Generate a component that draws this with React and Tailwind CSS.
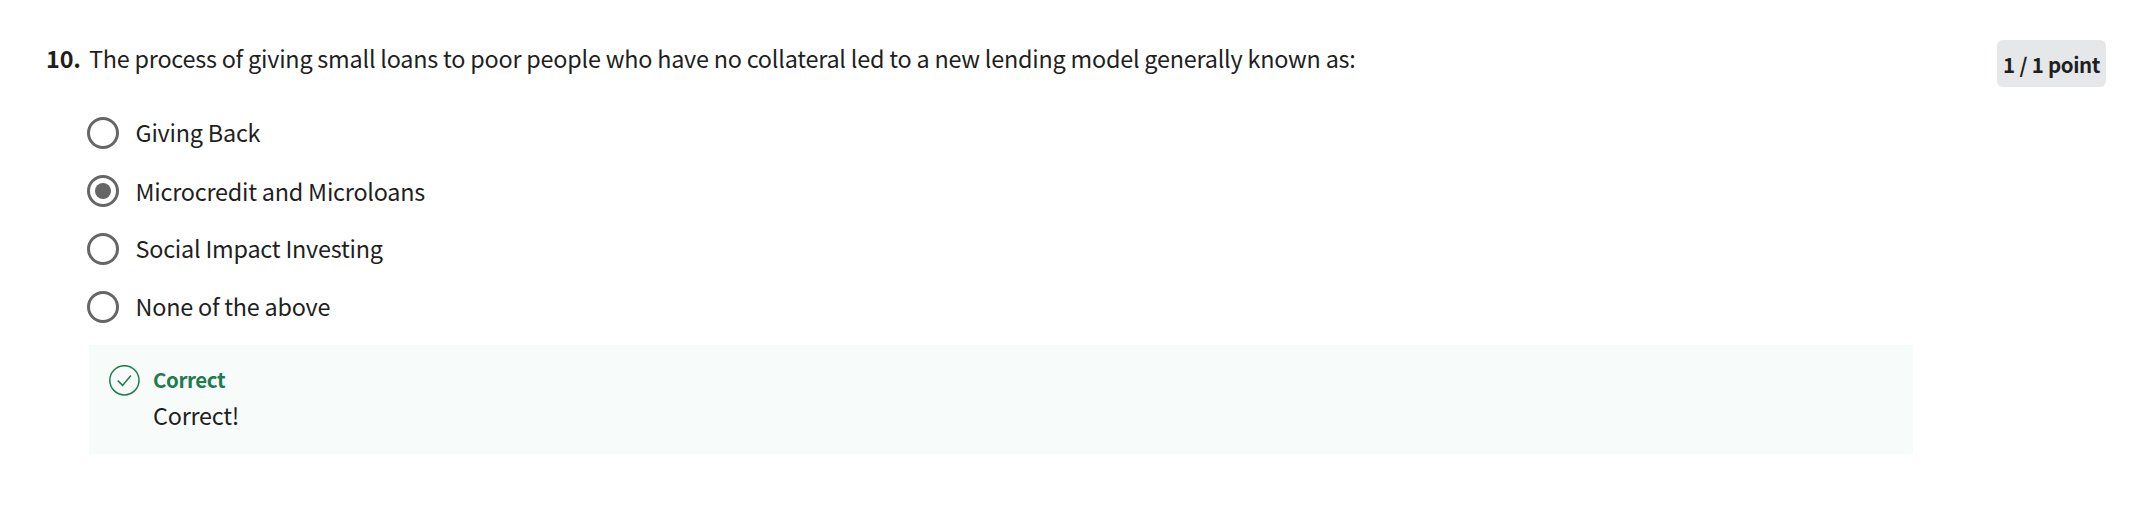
const options = [
  { label: "Giving Back", selected: false },
  { label: "Microcredit and Microloans", selected: true },
  { label: "Social Impact Investing", selected: false },
  { label: "None of the above", selected: false },
];

function Radio({ selected }) {
  return (
    <span className="flex size-8 shrink-0 items-center justify-center rounded-full border-3 border-[#666666]">
      {selected && <span className="size-4 rounded-full bg-[#666666]" />}
    </span>
  );
}

export default function App() {
  return (
    <main className="flex h-[516px] w-[2136px] items-start bg-white font-['Noto_Sans_CJK_SC',sans-serif] text-[23.4px] tracking-[-0.225px] text-[#1f1f1f]">
      <div className="w-[89px] shrink-0 pt-10 pl-[46px] leading-9 font-bold tracking-[-0.15px]">10.</div>
      <section className="w-[1824px] shrink-0">
        <p className="pt-10 leading-9 whitespace-nowrap">
          The process of giving small loans to poor people who have no collateral led to a new lending model generally known as:
        </p>
        <ul className="-ml-[2px] pt-[27px]">
          {options.map((option) => (
            <li key={option.label} className="flex h-[58px] items-center gap-[16.5px] whitespace-nowrap first:h-[59px]">
              <Radio selected={option.selected} />
              <span className={option.selected ? "pt-px" : ""}>{option.label}</span>
            </li>
          ))}
        </ul>
        <div className="mt-[9px] flex h-[109px] gap-3 bg-[#f7fbfa] pt-5 pl-5">
          <svg className="size-8" viewBox="0 0 32 32" fill="none" stroke="#1d7c50" strokeWidth="1.5">
            <circle cx="15.4" cy="15.3" r="14.6" />
            <path d="M8.8 15.6l4.8 4.8 8.3-10" />
          </svg>
          <div className="-mt-1 leading-9">
            <p className="text-[20.5px] font-bold tracking-[-0.4px] text-[#1d7c50]">Correct</p>
            <p>Correct!</p>
          </div>
        </div>
      </section>
      <div className="mt-10 ml-[84px] flex h-[47px] w-[109px] shrink-0 items-center justify-center rounded-md bg-[#e5e7e8] pt-px text-[20.5px] font-bold tracking-[-0.42px] [word-spacing:0.5px] whitespace-nowrap">
        1 / 1 point
      </div>
    </main>
  );
}
